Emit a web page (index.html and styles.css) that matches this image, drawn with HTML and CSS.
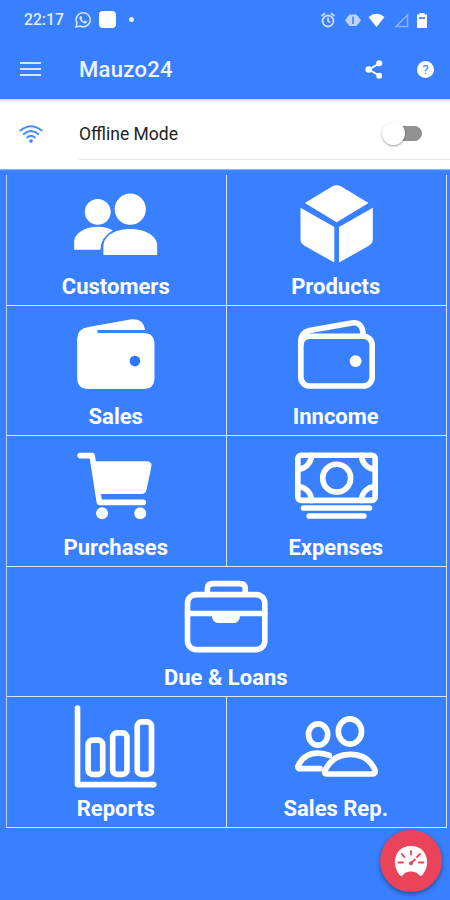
FILE: index.html
```html
<!DOCTYPE html>
<html lang="en">

<head>
    <meta charset="UTF-8">
    <meta name="viewport" content="width=device-width, initial-scale=1.0">
    <title>Mauzo24</title>
    <link rel="stylesheet" href="styles.css">
</head>

<body>
    <div class="status">
        <span class="time">22:17</span>
        <svg class="whatsapp" width="16" height="16" viewBox="0 0 16 16">
            <path class="thin" d="M1 15l1-4A7 7 0 1 1 5 14z" />
            <path d="M5 4.2l1.300-.2 1 2-.8 1.200q.8 1.500 2.400 2.200l1-.9 2 1-.2 1.300q-1.500 1.400-4.200-.4T4.500 6.500q-.2-1.500.5-2.300z" />
        </svg>
        <span class="app"></span>
        <span class="dot"></span>
        <svg class="system" width="110" height="18" viewBox="0 0 110 18">
            <g class="dim">
                <circle class="ring" cx="8" cy="10" r="5.500" />
                <path class="ring" d="M8 6.500V10l2.500 1.500M1.500 5L5 2.300M14.500 5L11 2.300" />
                <path d="M25 9.200L27.500 6l2-2.500h7l2 2.500L41 9.200l-2.500 3.200-2 2.500h-7l-2-2.500z" />
            </g>
            <path class="cut" d="M33 5.500v7.500" />
            <path d="M48.500 6Q56.500-.5 64.500 6L56.500 16z" />
            <path class="signal" d="M76 15.500H87.500V4z" />
            <path d="M97 3.500h2.500V2h5v1.500h2.500V17H97z" />
            <path class="cut" d="M99 7h6" />
        </svg>
    </div>

    <div class="header">
        <div class="menu">
            <span></span>
            <span></span>
            <span></span>
        </div>
        <h1>Mauzo24</h1>
        <svg class="share" width="18" height="19" viewBox="0 0 18 19">
            <path class="link" d="M14 3.500L4 9.500l10 6" />
            <circle cx="14.200" cy="3.300" r="3" />
            <circle cx="3.700" cy="9.500" r="3.300" />
            <circle cx="14.200" cy="15.700" r="3" />
        </svg>
        <span class="help">?</span>
    </div>

    <div class="offline">
        <svg class="wifi" width="24" height="20" viewBox="0 0 24 20">
            <path d="M1.500 6.500Q12-2 22.500 6.500M4.800 10Q12 4 19.200 10M8.200 13.500Q12 10.300 15.800 13.500" />
            <circle cx="12" cy="17" r="1.800" />
        </svg>
        <div class="row">
            <span class="name">Offline Mode</span>
            <span class="toggle"><span class="knob"></span></span>
        </div>
    </div>

    <div class="grid">
        <div class="cell">
            <svg class="icon" viewBox="0 0 288 264">
                <circle cx="89" cy="96" r="39" />
                <circle cx="187" cy="88" r="47" />
                <path d="M18 210V186C20 158 55 141 89 141Q116 141 134 152Q98 172 97 210Z" />
                <path d="M106 226V198C108 165 146 148 187 148C231 148 266 168 268 196V226Z" />
            </svg>
            <span class="label">Customers</span>
        </div>
        <div class="cell">
            <svg class="icon" viewBox="0 0 288 264">
                <path d="M50 69L131 20Q146 12 161 20L242 69L146 127Z" />
                <path d="M37 84L139 142V249L49 198Q37 190 37 180Z" />
                <path d="M255 84L153 142V249L243 198Q255 190 255 180Z" />
            </svg>
            <span class="label">Products</span>
        </div>
        <div class="cell">
            <svg class="icon" viewBox="0 0 288 264">
                <path d="M88 66H226Q260 66 260 100V201Q260 235 226 235H61Q27 235 27 201V84Q27 53 61 48L191 25Q226 21 232 57H88Z" />
                <circle class="hole" cx="201" cy="151" r="16" />
            </svg>
            <span class="label">Sales</span>
        </div>
        <div class="cell">
            <svg class="icon" viewBox="0 0 288 264">
                <rect class="line" x="38" y="76" width="215" height="150" rx="26" />
                <path class="line" d="M38 100Q36 66 64 59L191 36Q224 31 226 72" />
                <circle cx="203" cy="151" r="18" />
            </svg>
            <span class="label">Inncome</span>
        </div>
        <div class="cell">
            <svg class="icon" viewBox="0 0 288 264">
                <path class="line" d="M36 44H72L94 185H226" />
                <path d="M73 61H236Q252 61 251 75L236 147Q233 160 220 160H90Z" />
                <circle cx="102" cy="218" r="18" />
                <circle cx="217" cy="218" r="18" />
            </svg>
            <span class="label">Purchases</span>
        </div>
        <div class="cell">
            <svg class="icon" viewBox="0 0 288 264">
                <rect class="line" x="29" y="43" width="233" height="136" rx="10" />
                <circle class="line" cx="146" cy="112" r="42" />
                <path class="line" d="M29 85A42 42 0 0 0 70 43M262 85A42 42 0 0 1 221 43M29 137A42 42 0 0 1 70 179M262 137A42 42 0 0 0 221 179" />
                <path class="line" d="M46 202H245M63 226H228" />
            </svg>
            <span class="label">Expenses</span>
        </div>
        <div class="cell wide">
            <svg class="icon" viewBox="0 0 288 264">
                <rect class="line" x="28" y="68" width="233" height="166" rx="26" />
                <path class="line" d="M88 64V50Q88 35 104 35H186Q202 35 202 50V64M28 125H261" />
                <path d="M101 131H187Q184 154 166 154H122Q104 154 101 131Z" />
            </svg>
            <span class="label">Due &amp; Loans</span>
        </div>
        <div class="cell">
            <svg class="icon" viewBox="0 0 288 264">
                <path class="line" d="M28 18V249H258" />
                <rect class="line" x="60" y="115" width="44" height="103" rx="13" />
                <rect class="line" x="134" y="93" width="43" height="125" rx="13" />
                <rect class="line" x="208" y="60" width="43" height="158" rx="13" />
            </svg>
            <span class="label">Reports</span>
        </div>
        <div class="cell">
            <svg class="icon" viewBox="0 0 288 264">
                <ellipse class="line" cx="90" cy="98" rx="29" ry="32" />
                <ellipse class="line" cx="186" cy="89" rx="35" ry="38" />
                <path class="line" d="M124 161Q108 154 89 154Q48 154 30 192Q26 201 37 201H96" />
                <path class="line" d="M116 217Q106 217 112 204Q136 158 187 158Q240 158 261 204Q264 217 254 217Z" />
            </svg>
            <span class="label">Sales Rep.</span>
        </div>
    </div>

    <div class="fab">
        <svg width="36" height="32" viewBox="0 0 36 32">
            <path d="M7 30.500C-3 19 2 1 18 1s21 18 11 29.500q-1.500 1-3-.5-2-3.500-8-3.500T10 30q-1.500 1.500-3 .5z" />
            <path class="tick" d="M18 6v3.500M8.800 9l2.500 3M27 9l-3 3M5.500 17.500H10M26 17.500h4.500M17.500 18.500L22 14.500" />
            <circle class="hub" cx="18" cy="18.300" r="2" />
        </svg>
    </div>
</body>

</html>
```
FILE: styles.css
```css
* {
    box-sizing: border-box;
}

body {
    margin: 0;
    width: 450px;
    height: 900px;
    overflow: hidden;
    position: relative;
    background-color: #3880ff;
    color: #fff;
    font-family: Roboto, "Liberation Sans", sans-serif;
}

svg {
    display: block;
    fill: #fff;
}

.status {
    display: flex;
    align-items: center;
    height: 39px;
    padding: 0 20px 0 24px;
}

.time {
    width: 51px;
    font-size: 15.700px;
    font-weight: 500;
    color: #e4eeff;
}

.whatsapp {
    fill: #d5e4ff;
}

.whatsapp .thin {
    fill: none;
    stroke: #d5e4ff;
    stroke-width: 1.5;
}

.app {
    width: 17px;
    height: 17px;
    margin-left: 8px;
    border-radius: 4px;
    background: #fff;
}

.dot {
    width: 5px;
    height: 5px;
    margin-left: 13px;
    border-radius: 50%;
    background: #e4eeff;
}

.system {
    margin-left: auto;
}

.system .dim {
    fill: #bcd4ff;
}

.system .ring {
    fill: none;
    stroke: #c8dbff;
    stroke-width: 1.8;
}

.system .cut {
    stroke: #5b96ff;
    stroke-width: 2;
}

.system .signal {
    fill: none;
    stroke: #8ab4ff;
    stroke-width: 1.5;
}

.header {
    display: flex;
    align-items: center;
    height: 60px;
    padding: 0 16px 0 20px;
}

.menu {
    display: flex;
    flex-direction: column;
    gap: 4px;
    width: 21px;
    margin-right: 38px;
}

.menu span {
    height: 2px;
    background: #d7e5ff;
}

h1 {
    margin: 0;
    flex: 1;
    font-size: 22px;
    font-weight: 500;
    letter-spacing: 0.3px;
    color: #f0f5ff;
}

.share {
    margin-right: 34px;
}

.share .link {
    fill: none;
    stroke: #fff;
    stroke-width: 2;
}

.help {
    width: 17px;
    height: 17px;
    border-radius: 50%;
    background: #fff;
    color: #3880ff;
    font-size: 13px;
    line-height: 17px;
    text-align: center;
}

.offline {
    display: flex;
    align-items: center;
    height: 70px;
    padding-left: 19px;
    background: linear-gradient(#d5d5d5, #fff 4px);
    box-shadow: 0 1px 1px #8bb4ff;
}

.wifi {
    margin-right: 36px;
    fill: #3880ff;
}

.wifi path {
    fill: none;
    stroke: #4889ff;
    stroke-width: 2;
    stroke-linecap: round;
}

.row {
    display: flex;
    flex: 1;
    align-items: center;
    height: 52px;
    padding-right: 28px;
    border-bottom: 1px solid #e6e6e6;
}

.name {
    flex: 1;
    font-size: 17.5px;
    color: #222;
}

.toggle {
    display: flex;
    align-items: center;
    width: 36px;
    height: 15px;
    border-radius: 8px;
    background: #919191;
}

.knob {
    width: 23px;
    height: 23px;
    margin-left: -4px;
    border-radius: 50%;
    background: #fff;
    box-shadow: 0 1px 2px rgba(0, 0, 0, 0.4);
}

/* the cells draw right and bottom lines, the grid draws the left one */
.grid {
    display: grid;
    grid-template-columns: 220px 220px;
    grid-template-rows: repeat(5, 130.6px);
    width: 441px;
    margin: 6px 0 0 6px;
    border-left: 1px solid #b9d2ff;
}

.cell {
    display: flex;
    flex-direction: column;
    align-items: center;
    padding: 5px 1.5px 0 0;
    border-right: 1px solid #d7e5ff;
    border-bottom: 1px solid #d7e5ff;
}

.wide {
    grid-column: span 2;
}

.icon {
    width: 96px;
    height: 88px;
}

.icon .line {
    fill: none;
    stroke: #fff;
    stroke-width: 17;
    stroke-linecap: round;
    stroke-linejoin: round;
}

.icon .hole {
    fill: #2c78f8;
}

.label {
    font-size: 22px;
    font-weight: 700;
    line-height: 37px;
}

.fab {
    position: absolute;
    right: 8.500px;
    bottom: 8px;
    display: flex;
    align-items: center;
    justify-content: center;
    width: 62px;
    height: 62px;
    border-radius: 50%;
    background: #eb445a;
    box-shadow: 0 2px 5px rgba(0, 0, 0, 0.4);
}

.fab .tick {
    stroke: #eb445a;
    stroke-width: 1.8;
    stroke-linecap: round;
}

.fab .hub {
    fill: #eb445a;
}
```
